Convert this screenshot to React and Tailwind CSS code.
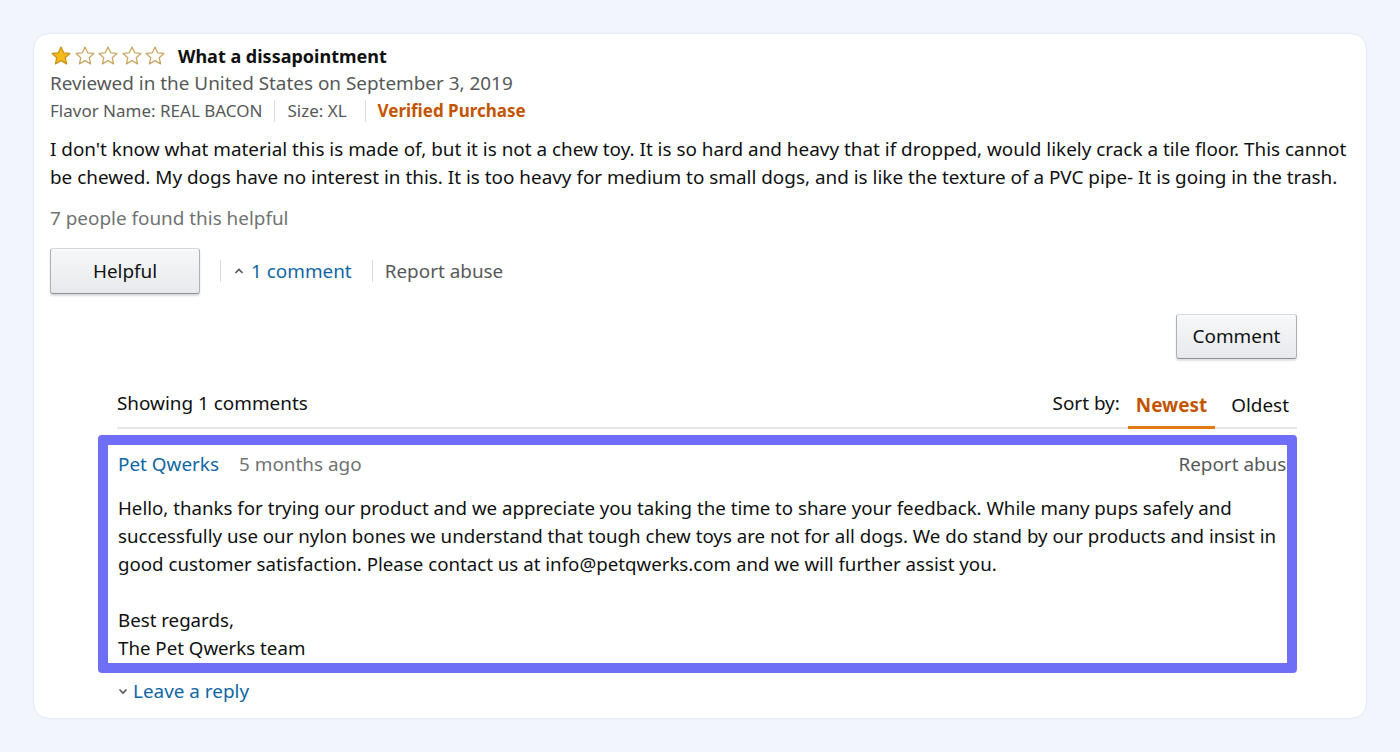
import React from 'react'

const Star = ({ filled }) => (
  <svg width="22" height="22" viewBox="0 0 24 24" className="shrink-0">
    <path
      d="M12 2.2l2.9 6.3 6.8.7-5.1 4.6 1.5 6.8L12 17.1l-6.1 3.5 1.5-6.8-5.1-4.6 6.8-.7z"
      fill={filled ? '#f7b81b' : '#ffffff'}
      stroke={filled ? '#c8951e' : '#c9a865'}
      strokeWidth="1.4"
      strokeLinejoin="round"
    />
  </svg>
)

const Divider = ({ className = 'mx-3' }) => <span className={`inline-block w-px h-[22px] bg-[#dddddd] ${className}`} />

export default function App() {
  return (
    <div
      className="min-h-[752px] bg-[#f3f5fd] pt-[33px] px-[33px] pb-[33px]"
      style={{ fontFamily: '"Noto Sans", "Open Sans", sans-serif' }}
    >
      <div className="bg-white rounded-[16px] border border-[#e6e8f7] pt-[10px] pb-[13px] pl-[16px] pr-[14px]">
        {/* header */}
        <div className="flex items-center h-[24px]">
          <div className="flex gap-[1.5px]">
            <Star filled />
            <Star />
            <Star />
            <Star />
            <Star />
          </div>
          <span className="ml-[12px] text-[18px] font-bold text-[#0f1111]">What a dissapointment</span>
        </div>
        <div className="text-[18.9px] text-[#565959] leading-[28px] mt-[1px]">
          Reviewed in the United States on September 3, 2019
        </div>
        <div className="flex items-center text-[17px] text-[#565959] leading-[28px]">
          <span>Flavor Name: REAL BACON</span>
          <Divider />
          <span>Size: XL</span>
          <Divider className="ml-[18px] mr-[12px]" />
          <span className="font-bold text-[#c45500]">Verified Purchase</span>
        </div>
        <p className="text-[18.9px] text-[#0f1111] leading-[28px] mt-[10px]">
          I don't know what material this is made of, but it is not a chew toy. It is so hard and heavy that if dropped, would likely crack a tile floor. This cannot be chewed. My dogs have no interest in this. It is too heavy for medium to small dogs, and is like the texture of a PVC pipe- It is going in the trash.
        </p>
        <div className="text-[18.9px] text-[#6f7373] leading-[28px] mt-[13px]">7 people found this helpful</div>

        {/* actions */}
        <div className="flex items-center mt-[16px]">
          <button className="w-[150px] h-[46px] rounded-[3px] border border-[#adb1b8] border-t-[#d5d9d9] border-b-[#8d9096] bg-gradient-to-b from-[#f7f8fa] to-[#e7e9ec] shadow-[0_1px_0_rgba(255,255,255,0.6)_inset,0_2px_2px_rgba(0,0,0,0.15)] text-[18.9px] text-[#0f1111]">
            Helpful
          </button>
          <Divider className="ml-[20px] mr-[12px]" />
          <span className="flex items-center text-[18.9px] text-[#0f66a4]">
            <svg width="12" height="12" viewBox="0 0 12 12" className="mr-[6px]">
              <path d="M2.5 8l3.5-3.5L9.5 8" fill="none" stroke="#555" strokeWidth="1.6" />
            </svg>
            1 comment
          </span>
          <Divider className="ml-[20px] mr-[12px]" />
          <span className="text-[18.9px] text-[#565959]">Report abuse</span>
        </div>

        {/* comment area */}
        <div className="ml-[67px] mr-[55px]">
          <div className="flex justify-end mt-[20px]">
            <button className="w-[121px] h-[45px] rounded-[3px] border border-[#adb1b8] border-t-[#d5d9d9] border-b-[#8d9096] bg-gradient-to-b from-[#f7f8fa] to-[#e7e9ec] shadow-[0_1px_0_rgba(255,255,255,0.6)_inset,0_2px_2px_rgba(0,0,0,0.12)] text-[18.9px] text-[#0f1111]">
              Comment
            </button>
          </div>

          <div className="flex items-end justify-between mt-[30px] border-b-2 border-[#e7e7e7]">
            <span className="text-[18.9px] text-[#0f1111] leading-[28px] pb-[10px]">Showing 1 comments</span>
            <div className="flex items-end text-[18.9px] leading-[28px]">
              <span className="text-[#0f1111] pb-[10px] mr-[8px]">Sort by:</span>
              <span className="font-bold text-[#c45500] px-[8px] pb-[7px] border-b-[3px] border-[#e47911] mb-[-2px]">Newest</span>
              <span className="text-[#0f1111] pl-[16px] pb-[8px] pr-[8px]">Oldest</span>
            </div>
          </div>

          <div className="ml-[-19px] mt-[6px] border-[10px] border-[#6e6ef6] rounded-[4px] overflow-hidden">
            <div className="pl-[10px] mr-[-10px] pt-[5px] pb-[1px]">
              <div className="flex justify-between text-[18.9px] leading-[28px]">
                <div>
                  <span className="text-[#0f66a4]">Pet Qwerks</span>
                  <span className="text-[#6f7373] ml-[20px]">5 months ago</span>
                </div>
                <span className="text-[#565959]">Report abuse</span>
              </div>
              <div className="text-[18.7px] text-[#0f1111] leading-[28px] mt-[16px] pr-[14px]">
                <p className="mr-[-10px]">
                  Hello, thanks for trying our product and we appreciate you taking the time to share your feedback. While many pups safely and successfully use our nylon bones we understand that tough chew toys are not for all dogs. We do stand by our products and insist in good customer satisfaction. Please contact us at info@petqwerks.com and we will further assist you.
                </p>
                <p className="mt-[28px]">Best regards,</p>
                <p>The Pet Qwerks team</p>
              </div>
            </div>
          </div>

          <div className="flex items-center mt-[4px] text-[18.9px] text-[#0f66a4] leading-[28px]">
            <svg width="12" height="12" viewBox="0 0 12 12" className="mr-[4px]">
              <path d="M2.5 4.5L6 8l3.5-3.5" fill="none" stroke="#555" strokeWidth="1.6" />
            </svg>
            Leave a reply
          </div>
        </div>
      </div>
    </div>
  )
}
